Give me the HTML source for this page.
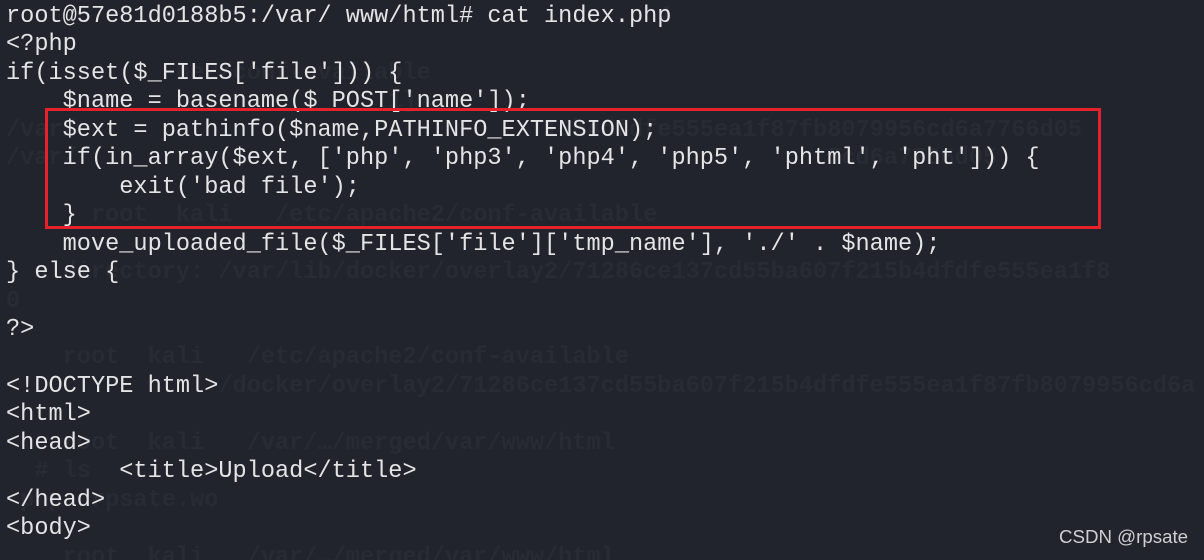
<!DOCTYPE html>
<html><head><style>
html,body{margin:0;padding:0;background:#22242d;width:1204px;height:560px;overflow:hidden;position:relative}
pre{margin:0;position:absolute;left:6px;top:3px;font-family:"Liberation Mono",monospace;font-size:23.6px;line-height:28.45px;white-space:pre;color:#e4e4e4}
.ghost{color:#282b34;font-weight:bold}
.box{position:absolute;left:45px;top:108px;width:1050px;height:115px;border:3px solid #e5212c}
.wm{position:absolute;left:1059px;top:526px;font-family:"Liberation Sans",sans-serif;font-size:18.7px;color:#cfcfcf}
</style></head><body>
<pre class="ghost">
                                              4

            he2/conf-available
                           1]
/var/                                 15b4dfdfe555ea1f87fb8079956cd6a7766d05
/var/                                                     5cd6a7766d05

      root  kali   /etc/apache2/conf-available

  a directory: /var/lib/docker/overlay2/71286ce137cd55ba607f215b4dfdfe555ea1f8
0

    root  kali   /etc/apache2/conf-available
               /docker/overlay2/71286ce137cd55ba607f215b4dfdfe555ea1f87fb8079956cd6a

    root  kali   /var/…/merged/var/www/html
  # ls
 php  rpsate.wo

    root  kali   /var/…/merged/var/www/html</pre>
<pre>root@57e81d0188b5:/var/ www/html# cat index.php
&lt;?php
if(isset($_FILES['file'])) {
    $name = basename($_POST['name']);
    $ext = pathinfo($name,PATHINFO_EXTENSION);
    if(in_array($ext, ['php', 'php3', 'php4', 'php5', 'phtml', 'pht'])) {
        exit('bad file');
    }
    move_uploaded_file($_FILES['file']['tmp_name'], './' . $name);
} else {

?&gt;

&lt;!DOCTYPE html&gt;
&lt;html&gt;
&lt;head&gt;
        &lt;title&gt;Upload&lt;/title&gt;
&lt;/head&gt;
&lt;body&gt;</pre>
<div class="box"></div>
<div class="wm">CSDN @rpsate</div>
</body></html>
